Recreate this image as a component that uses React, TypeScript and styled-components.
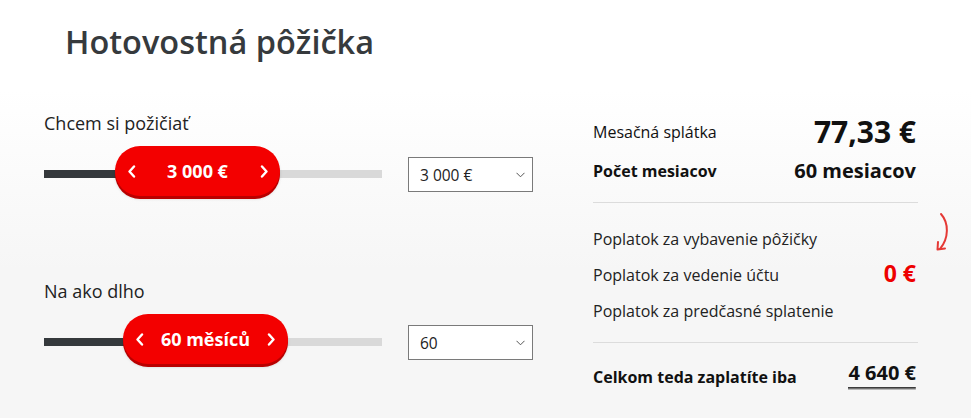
import React from 'react';
import styled, { createGlobalStyle } from 'styled-components';

const Global = createGlobalStyle`
  html, body { margin: 0; padding: 0; }
  body {
    font-family: "Open Sans", "Liberation Sans", sans-serif;
    color: #222;
    background: #f7f7f7;
  }
`;

const Page = styled.div`
  width: 971px;
  height: 418px;
  box-sizing: border-box;
  overflow: hidden;
  padding: 22px 53px 0 44px;
  background: linear-gradient(180deg, #ffffff 0px, #ffffff 90px, #f6f6f6 270px, #f6f6f6 100%);
`;

const Title = styled.h1`
  margin: 0 0 0 21px;
  font-size: 32.5px;
  line-height: 40px;
  font-weight: 600;
  color: #363a3d;
`;

const Main = styled.div`
  display: grid;
  grid-template-columns: 489px 1fr;
  column-gap: 60px;
  margin-top: 49px;
`;

const LeftColumn = styled.div`
  display: flex;
  flex-direction: column;
  gap: 80px;
`;

const SliderBlock = styled.div`
  display: flex;
  flex-direction: column;
  gap: 11px;
`;

const Label = styled.div`
  font-size: 18px;
  line-height: 24px;
  color: #222;
`;

const SliderRow = styled.div`
  display: flex;
  align-items: center;
  gap: 26px;
  height: 53px;
`;

const TrackArea = styled.div`
  position: relative;
  width: 338px;
  height: 53px;
  display: flex;
  align-items: center;
`;

const Bar = styled.div<{ $fill: number }>`
  width: 100%;
  height: 8px;
  margin-top: 3px;
  background: linear-gradient(
    90deg,
    #35393c 0,
    #35393c ${(p) => p.$fill}px,
    #d9d9d9 ${(p) => p.$fill}px,
    #d9d9d9 100%
  );
`;

const Thumb = styled.div<{ $left: number }>`
  position: absolute;
  top: 0;
  left: ${(p) => p.$left}px;
  width: 165px;
  height: 50px;
  box-sizing: border-box;
  padding: 0 11px;
  border-radius: 25px;
  background: #f30000;
  box-shadow: 0 3px 0 #b90000, 0 3px 3px rgba(0, 0, 0, 0.15);
  display: flex;
  align-items: center;
  justify-content: space-between;
  color: #fff;
`;

const ThumbValue = styled.span`
  font-size: 18px;
  font-weight: 700;
  line-height: 24px;
  white-space: nowrap;
`;

const ThumbArrow = styled.span`
  display: flex;
  width: 10px;
  justify-content: center;
`;

const SelectBox = styled.div`
  position: relative;
  width: 125px;
  height: 35px;
  box-sizing: border-box;
  border: 1px solid #7a7a7a;
  background: #fff;
  margin-top: 4px;
`;

const NativeSelect = styled.select`
  appearance: none;
  -webkit-appearance: none;
  width: 100%;
  height: 100%;
  border: none;
  outline: none;
  background: transparent;
  padding: 0 0 0 11px;
  font-family: "Open Sans", "Liberation Sans", sans-serif;
  font-size: 15.5px;
  color: #222;
`;

const SelectChevron = styled.svg`
  position: absolute;
  right: 7px;
  top: 14px;
  pointer-events: none;
`;

const RightColumn = styled.div`
  display: flex;
  flex-direction: column;
  padding-top: 1px;
`;

const SummaryRow = styled.div<{ $gap?: number }>`
  display: flex;
  justify-content: space-between;
  align-items: center;
  padding-right: 2px;
  margin-top: ${(p) => p.$gap ?? 0}px;
`;

const RowLabel = styled.span<{ $bold?: boolean }>`
  font-size: 16px;
  font-weight: ${(p) => (p.$bold ? 700 : 400)};
  line-height: 24px;
  color: #111;
`;

const BigValue = styled.span`
  font-size: 30px;
  font-weight: 700;
  line-height: 40px;
  color: #111;
`;

const MidValue = styled.span`
  font-size: 20px;
  font-weight: 700;
  line-height: 28px;
  color: #111;
`;

const Divider = styled.hr<{ $gap: number }>`
  border: none;
  height: 1px;
  background: #dcdcdc;
  margin: ${(p) => p.$gap}px 0 0 0;
`;

const Fees = styled.div`
  position: relative;
  display: flex;
  justify-content: space-between;
  align-items: center;
  padding-right: 2px;
  margin-top: 18px;
`;

const FeeList = styled.ul`
  list-style: none;
  margin: 0;
  padding: 0;
`;

const FeeItem = styled.li`
  font-size: 16px;
  line-height: 36px;
  color: #222;
`;

const ZeroValue = styled.span`
  font-size: 23px;
  font-weight: 700;
  line-height: 30px;
  color: #ee0000;
  margin-bottom: 4px;
`;

const CurvedArrow = styled.svg`
  position: absolute;
  right: -33px;
  top: -10px;
`;

const TotalRow = styled.div`
  display: flex;
  justify-content: space-between;
  align-items: flex-end;
  padding-right: 2px;
  margin-top: 18px;
`;

const TotalLabel = styled.span`
  font-size: 16px;
  font-weight: 700;
  line-height: 24px;
  padding-bottom: 1px;
  color: #111;
`;

const TotalValue = styled.span`
  font-size: 20px;
  font-weight: 700;
  line-height: 24px;
  color: #111;
  padding-bottom: 5px;
  background: linear-gradient(180deg, #3c3c3c 0, #3c3c3c 1px, #a8a8a8 2px, #c8c8c8 3px) bottom / 100% 3px no-repeat;
`;

const Chevron = ({ dir }: { dir: 'left' | 'right' }) => (
  <svg width="9" height="13" viewBox="0 0 9 13">
    <path
      d={dir === 'left' ? 'M7 1.5 L2.5 6.5 L7 11.5' : 'M2 1.5 L6.5 6.5 L2 11.5'}
      fill="none"
      stroke="#fff"
      strokeWidth="2.4"
      strokeLinecap="round"
      strokeLinejoin="round"
    />
  </svg>
);

type SliderProps = {
  label: string;
  value: string;
  left: number;
  options: { value: string; label: string }[];
  selected: string;
};

const Slider = ({ label, value, left, options, selected }: SliderProps) => (
  <SliderBlock>
    <Label>{label}</Label>
    <SliderRow>
      <TrackArea>
        <Bar $fill={left + 82} />
        <Thumb $left={left}>
          <ThumbArrow>
            <Chevron dir="left" />
          </ThumbArrow>
          <ThumbValue>{value}</ThumbValue>
          <ThumbArrow>
            <Chevron dir="right" />
          </ThumbArrow>
        </Thumb>
      </TrackArea>
      <SelectBox>
        <NativeSelect defaultValue={selected}>
          {options.map((o) => (
            <option key={o.value} value={o.value}>
              {o.label}
            </option>
          ))}
        </NativeSelect>
        <SelectChevron width="9" height="6" viewBox="0 0 9 6">
          <path d="M0.5 0.8 L4.5 4.8 L8.5 0.8" fill="none" stroke="#555" strokeWidth="1" />
        </SelectChevron>
      </SelectBox>
    </SliderRow>
  </SliderBlock>
);

export default function App() {
  return (
    <>
      <Global />
      <Page>
        <Title>Hotovostná pôžička</Title>
        <Main>
          <LeftColumn>
            <Slider
              label="Chcem si požičiať"
              value="3 000 €"
              left={71}
              selected="3000"
              options={[
                { value: '1000', label: '1 000 €' },
                { value: '2000', label: '2 000 €' },
                { value: '3000', label: '3 000 €' },
                { value: '4000', label: '4 000 €' },
              ]}
            />
            <Slider
              label="Na ako dlho"
              value="60 měsíců"
              left={79}
              selected="60"
              options={[
                { value: '24', label: '24' },
                { value: '36', label: '36' },
                { value: '48', label: '48' },
                { value: '60', label: '60' },
              ]}
            />
          </LeftColumn>
          <RightColumn>
            <SummaryRow>
              <RowLabel>Mesačná splátka</RowLabel>
              <BigValue>77,33 €</BigValue>
            </SummaryRow>
            <SummaryRow $gap={5}>
              <RowLabel $bold>Počet mesiacov</RowLabel>
              <MidValue>60 mesiacov</MidValue>
            </SummaryRow>
            <Divider $gap={17} />
            <Fees>
              <FeeList>
                <FeeItem>Poplatok za vybavenie pôžičky</FeeItem>
                <FeeItem>Poplatok za vedenie účtu</FeeItem>
                <FeeItem>Poplatok za predčasné splatenie</FeeItem>
              </FeeList>
              <ZeroValue>0 €</ZeroValue>
              <CurvedArrow width="18" height="42" viewBox="0 0 18 42">
                <path
                  d="M8 3 C 16 12, 16 27, 7 38"
                  fill="none"
                  stroke="#e53935"
                  strokeWidth="2"
                  strokeLinecap="round"
                />
                <path
                  d="M5 31 L4.5 38.5 L12 37.5"
                  fill="none"
                  stroke="#e53935"
                  strokeWidth="2"
                  strokeLinecap="round"
                  strokeLinejoin="round"
                />
              </CurvedArrow>
            </Fees>
            <Divider $gap={13} />
            <TotalRow>
              <TotalLabel>Celkom teda zaplatíte iba</TotalLabel>
              <TotalValue>4 640 €</TotalValue>
            </TotalRow>
          </RightColumn>
        </Main>
      </Page>
    </>
  );
}
